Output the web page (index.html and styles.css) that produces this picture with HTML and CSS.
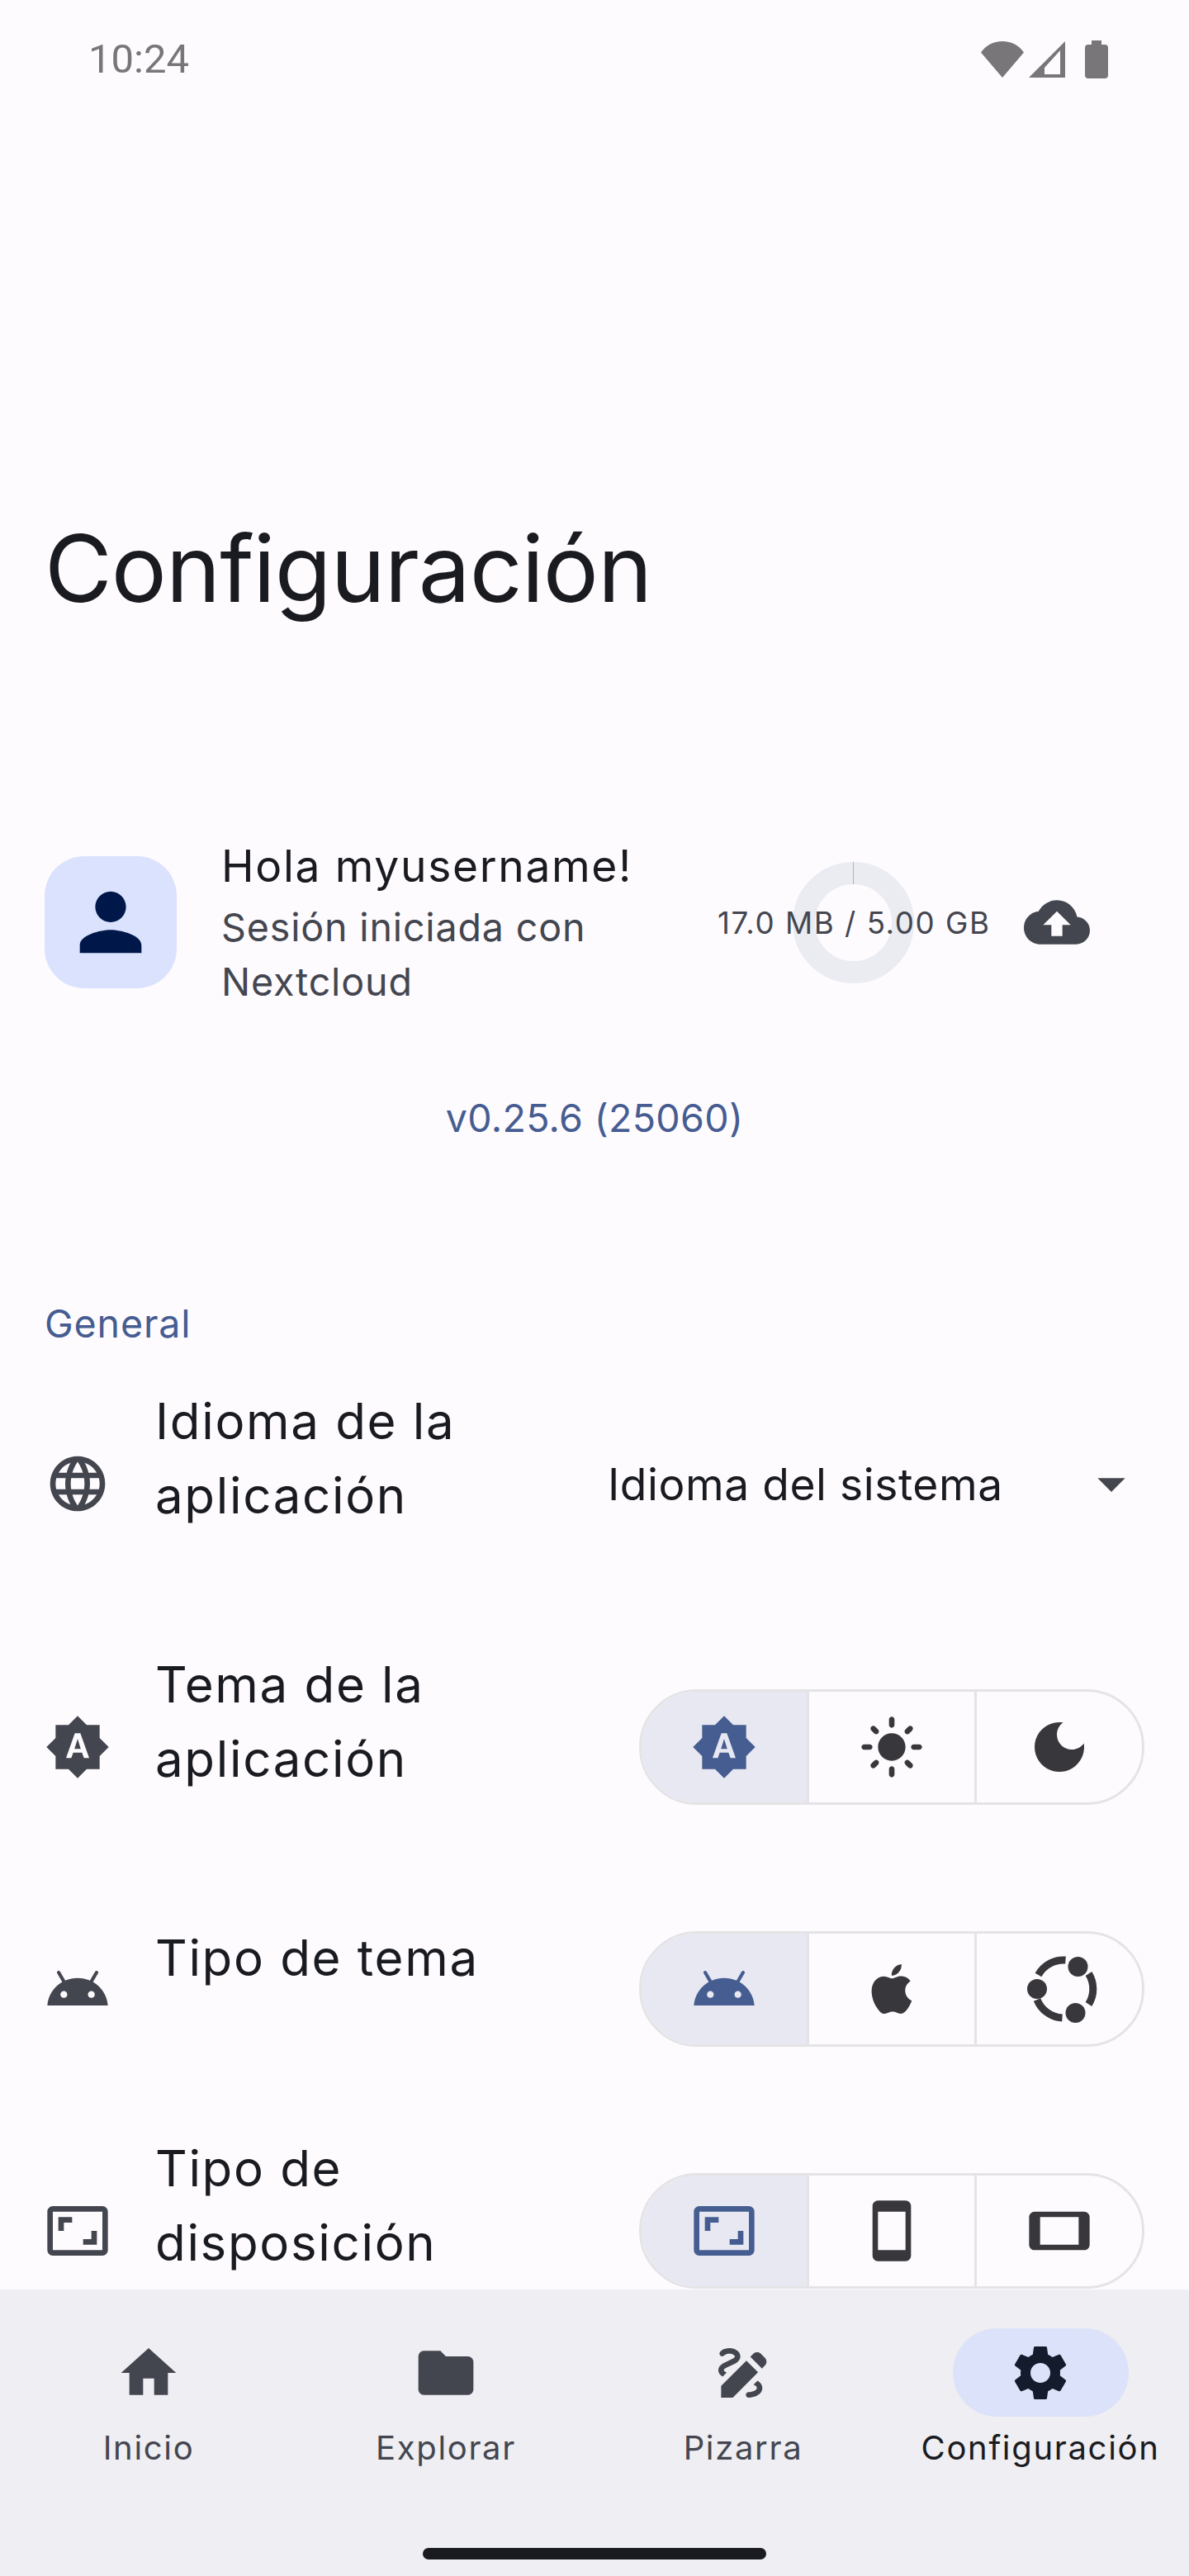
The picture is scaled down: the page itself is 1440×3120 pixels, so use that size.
FILE: index.html
```html
<!DOCTYPE html>
<html>

<head>
    <title>Configuración</title>
    <meta charset="UTF-8">
    <meta name="viewport" content="width=device-width, initial-scale=1.0">
    <link rel="stylesheet" href="styles.css">
</head>

<body>
    <svg class="icon-defs" xmlns="http://www.w3.org/2000/svg">
        <symbol id="i-person" viewBox="0 0 24 24"><path d="M12 12c2.21 0 4-1.79 4-4s-1.79-4-4-4-4 1.79-4 4 1.79 4 4 4zm0 2c-2.67 0-8 1.34-8 4v2h16v-2c0-2.66-5.33-4-8-4z"/></symbol>
        <symbol id="i-cloud" viewBox="0 0 24 24"><path d="M19.35 10.04C18.67 6.59 15.64 4 12 4 9.11 4 6.6 5.64 5.35 8.04 2.34 8.36 0 10.91 0 14c0 3.31 2.69 6 6 6h13c2.76 0 5-2.24 5-5 0-2.64-2.05-4.78-4.65-4.96zM14 13v4h-4v-4H7l5-5 5 5h-3z"/></symbol>
        <symbol id="i-globe" viewBox="0 0 24 24"><path d="M11.99 2C6.47 2 2 6.48 2 12s4.47 10 9.99 10C17.52 22 22 17.52 22 12S17.52 2 11.99 2zm6.93 6h-2.95c-.32-1.25-.78-2.45-1.38-3.56 1.84.63 3.37 1.91 4.33 3.56zM12 4.04c.83 1.2 1.48 2.53 1.91 3.96h-3.82c.43-1.43 1.08-2.76 1.91-3.96zM4.26 14C4.1 13.36 4 12.69 4 12s.1-1.36.26-2h3.38c-.08.66-.14 1.32-.14 2 0 .68.06 1.34.14 2H4.26zm.82 2h2.95c.32 1.25.78 2.45 1.38 3.56-1.84-.63-3.37-1.9-4.33-3.56zm2.95-8H5.08c.96-1.66 2.49-2.93 4.33-3.56C8.81 5.55 8.35 6.75 8.03 8zM12 19.96c-.83-1.2-1.48-2.53-1.91-3.96h3.82c-.43 1.43-1.08 2.76-1.91 3.96zM14.34 14H9.66c-.09-.66-.16-1.32-.16-2 0-.68.07-1.35.16-2h4.68c.09.65.16 1.32.16 2 0 .68-.07 1.34-.16 2zm.25 5.56c.6-1.11 1.06-2.31 1.38-3.56h2.95c-.96 1.65-2.49 2.93-4.33 3.56zM16.36 14c.08-.66.14-1.32.14-2 0-.68-.06-1.34-.14-2h3.38c.16.64.26 1.31.26 2s-.1 1.36-.26 2h-3.38z"/></symbol>
        <symbol id="i-arrow" viewBox="0 0 24 24"><path d="M7 10l5 5 5-5z"/></symbol>
        <symbol id="i-auto" viewBox="0 0 24 24"><path d="M10.85 12.65h2.3L12 9l-1.15 3.65zM20 8.69V4h-4.69L12 .69 8.69 4H4v4.69L.69 12 4 15.31V20h4.69L12 23.31 15.31 20H20v-4.69L23.31 12 20 8.69zM14.3 16l-.7-2h-3.2l-.7 2H7.8L11 7h2l3.2 9h-1.9z"/></symbol>
        <symbol id="i-sun" viewBox="0 0 24 24"><path d="M12 7c-2.76 0-5 2.24-5 5s2.24 5 5 5 5-2.24 5-5-2.24-5-5-5zM2 13h2c.55 0 1-.45 1-1s-.45-1-1-1H2c-.55 0-1 .45-1 1s.45 1 1 1zm18 0h2c.55 0 1-.45 1-1s-.45-1-1-1h-2c-.55 0-1 .45-1 1s.45 1 1 1zM11 2v2c0 .55.45 1 1 1s1-.45 1-1V2c0-.55-.45-1-1-1s-1 .45-1 1zm0 18v2c0 .55.45 1 1 1s1-.45 1-1v-2c0-.55-.45-1-1-1s-1 .45-1 1zM5.99 4.58c-.39-.39-1.03-.39-1.41 0-.39.39-.39 1.03 0 1.41l1.06 1.06c.39.39 1.03.39 1.41 0s.39-1.03 0-1.41L5.99 4.58zm12.37 12.37c-.39-.39-1.03-.39-1.41 0-.39.39-.39 1.03 0 1.41l1.06 1.06c.39.39 1.03.39 1.41 0 .39-.39.39-1.03 0-1.41l-1.06-1.06zm1.06-10.96c.39-.39.39-1.03 0-1.41-.39-.39-1.03-.39-1.41 0l-1.06 1.06c-.39.39-.39 1.03 0 1.41s1.03.39 1.41 0l1.06-1.06zM7.05 18.36c.39-.39.39-1.03 0-1.41-.39-.39-1.03-.39-1.41 0l-1.06 1.06c-.39.39-.39 1.03 0 1.41s1.03.39 1.41 0l1.06-1.06z"/></symbol>
        <symbol id="i-moon" viewBox="0 0 24 24"><path d="M12 3c-4.97 0-9 4.03-9 9s4.03 9 9 9 9-4.03 9-9c0-.46-.04-.92-.1-1.36-.98 1.37-2.58 2.26-4.4 2.26-2.98 0-5.4-2.42-5.4-5.4 0-1.81.89-3.42 2.26-4.4-.44-.06-.9-.1-1.36-.1z"/></symbol>
        <symbol id="i-android" viewBox="0 0 24 24"><path d="M17.6 9.48l1.84-3.18c.16-.31.04-.69-.26-.85-.29-.15-.65-.06-.83.22l-1.88 3.24c-2.86-1.21-6.08-1.21-8.94 0L5.65 5.67c-.19-.29-.58-.38-.87-.2-.28.18-.37.54-.22.83L6.4 9.48C3.3 11.25 1.28 14.44 1 18h22c-.28-3.56-2.3-6.75-5.4-8.52zM7 15.25c-.69 0-1.25-.56-1.25-1.25s.56-1.25 1.25-1.25 1.25.56 1.25 1.25-.56 1.25-1.25 1.25zm10 0c-.69 0-1.25-.56-1.25-1.25s.56-1.25 1.25-1.25 1.25.56 1.25 1.25-.56 1.25-1.25 1.25z"/></symbol>
        <symbol id="i-apple" viewBox="0 0 24 24"><path d="M18.71 19.5C17.88 20.74 17 21.95 15.66 21.97C14.32 22 13.89 21.18 12.37 21.18C10.84 21.18 10.37 21.95 9.1 22C7.79 22.05 6.8 20.68 5.96 19.47C4.25 17 2.94 12.45 4.7 9.39C5.57 7.87 7.13 6.91 8.82 6.88C10.1 6.86 11.32 7.75 12.11 7.75C12.89 7.75 14.37 6.68 15.92 6.84C16.57 6.87 18.39 7.1 19.56 8.82C19.47 8.88 17.39 10.1 17.41 12.63C17.44 15.65 20.06 16.66 20.09 16.67C20.06 16.74 19.67 18.11 18.71 19.5M13 3.5C13.73 2.67 14.94 2.04 15.94 2C16.07 3.17 15.6 4.35 14.9 5.19C14.21 6.04 13.07 6.7 11.95 6.61C11.8 5.46 12.36 4.26 13 3.5Z"/></symbol>
        <symbol id="i-ubuntu" viewBox="-3.5 0 100 100">
            <path class="ubuntu-arc" d="M19 33A35 35 0 0 1 52 15M80 31.500A35 35 0 0 1 80 68.500M17.500 63A35 35 0 0 0 48 85"/>
            <circle cx="17.500" cy="50" r="12"/><circle cx="67" cy="23" r="12"/><circle cx="64" cy="79" r="12"/>
        </symbol>
        <symbol id="i-ratio" viewBox="0 0 24 24"><path d="M19 12h-2v3h-3v2h5v-5zM7 9h3V7H5v5h2V9zm14-6H3c-1.1 0-2 .9-2 2v14c0 1.1.9 2 2 2h18c1.1 0 2-.9 2-2V5c0-1.1-.9-2-2-2zm0 16.010H3V4.990h18v14.020z"/></symbol>
        <symbol id="i-portrait" viewBox="0 0 24 24"><path d="M17 1.010L7 1c-1.100 0-1.990.9-1.990 2v18c0 1.100.89 2 1.990 2h10c1.100 0 2-.9 2-2V3c0-1.100-.9-1.990-2-1.990zM17 19H7V5h10v14z"/></symbol>
        <symbol id="i-landscape" viewBox="0 0 24 24"><path d="M1.010 7L1 17c0 1.100.9 2 2 2h18c1.100 0 2-.9 2-2V7c0-1.100-.9-2-2-2H3c-1.100 0-1.990.9-1.990 2zM19 7v10H5V7h14z"/></symbol>
        <symbol id="i-home" viewBox="0 0 24 24"><path d="M10 20v-6h4v6h5v-8h3L12 3 2 12h3v8z"/></symbol>
        <symbol id="i-folder" viewBox="0 0 24 24"><path d="M10 4H4c-1.100 0-1.990.9-1.990 2L2 18c0 1.100.9 2 2 2h16c1.100 0 2-.9 2-2V8c0-1.100-.9-2-2-2h-8l-2-2z"/></symbol>
        <symbol id="i-draw" viewBox="0 0 24 24"><path d="M18.850 10.390l1.060-1.060c.78-.78.78-2.050 0-2.830L18.500 5.090c-.78-.78-2.050-.78-2.830 0l-1.060 1.060 4.240 4.240zm-5.660-2.830L4 16.760V21h4.240l9.190-9.190-4.240-4.250zM19 17.500c0 2.190-2.540 3.500-5 3.500-.55 0-1-.45-1-1s.45-1 1-1c1.540 0 3-.73 3-1.500 0-.47-.48-.87-1.230-1.200l1.480-1.480c1.070.63 1.750 1.470 1.750 2.680zM4.580 13.350C3.610 12.790 3 12.060 3 11c0-1.800 1.890-2.630 3.560-3.360C7.590 7.180 9 6.560 9 6c0-.41-.78-1-2-1-1.260 0-1.800.61-1.830.64-.35.41-.98.46-1.400.12-.41-.34-.49-.95-.15-1.380C3.730 4.240 4.760 3 7 3s4 1.320 4 3c0 1.870-1.930 2.720-3.640 3.470C6.420 9.880 5 10.500 5 11c0 .31.43.6 1.070.86l-1.490 1.490z"/></symbol>
        <symbol id="i-gear" viewBox="0 0 24 24"><path d="M19.140 12.940c.04-.3.06-.61.06-.94 0-.32-.02-.64-.07-.94l2.030-1.580c.18-.14.23-.41.12-.61l-1.920-3.320c-.12-.22-.37-.29-.59-.22l-2.390.96c-.5-.38-1.030-.7-1.620-.94l-.36-2.540c-.04-.24-.24-.41-.48-.41h-3.840c-.24 0-.43.17-.47.41l-.36 2.540c-.59.24-1.130.57-1.620.94l-2.390-.96c-.22-.08-.47 0-.59.22L2.740 8.870c-.12.21-.08.47.12.61l2.030 1.580c-.05.3-.09.63-.09.94s.02.64.07.94l-2.030 1.580c-.18.14-.23.41-.12.61l1.920 3.320c.12.22.37.29.59.22l2.390-.96c.5.38 1.030.7 1.620.94l.36 2.54c.05.24.24.41.48.41h3.840c.24 0 .44-.17.47-.41l.36-2.540c.59-.24 1.130-.56 1.620-.94l2.390.96c.22.08.47 0 .59-.22l1.920-3.320c.12-.22.07-.47-.12-.61l-2.010-1.580zM12 15.600c-1.980 0-3.600-1.620-3.600-3.600s1.620-3.600 3.600-3.600 3.600 1.620 3.600 3.600-1.620 3.600-3.600 3.600z"/></symbol>
    </svg>

    <div class="phone">
        <div class="status-bar">
            <span class="status-time">10:24</span>
            <div class="status-icons">
                <svg class="status-wifi" viewBox="0 0 52 44"><path d="M26 44L0 13.500C6 5 15 0 26 0s20 5 26 13.500z"/></svg>
                <svg class="status-signal" viewBox="0 0 44 44"><path fill-rule="evenodd" d="M44 0V44H0zM38 11L19 32V40H38z"/></svg>
                <div class="status-battery"></div>
            </div>
        </div>

        <main class="content">
            <h1 class="page-title">Configuración</h1>

            <section class="profile">
                <div class="avatar"><svg class="icon-avatar"><use href="#i-person"/></svg></div>
                <div class="profile-text">
                    <div class="profile-name">Hola myusername!</div>
                    <div class="profile-sub">Sesión iniciada con Nextcloud</div>
                </div>
                <div class="storage">
                    <svg class="storage-ring" viewBox="0 0 147 147">
                        <circle class="ring-track" cx="73.500" cy="73.500" r="60"/>
                        <path class="ring-tick" d="M73.500 0V27"/>
                    </svg>
                    <span class="storage-text">17.0 MB / 5.00 GB</span>
                    <svg class="icon icon-muted"><use href="#i-cloud"/></svg>
                </div>
            </section>

            <div class="version">v0.25.6 (25060)</div>

            <h2 class="section-title">General</h2>

            <div class="setting setting-lang">
                <svg class="icon icon-muted"><use href="#i-globe"/></svg>
                <div class="setting-label">Idioma de la aplicación</div>
                <div class="dropdown">
                    <span>Idioma del sistema</span>
                    <svg class="icon icon-muted"><use href="#i-arrow"/></svg>
                </div>
            </div>

            <div class="setting">
                <svg class="icon icon-muted"><use href="#i-auto"/></svg>
                <div class="setting-label">Tema de la aplicación</div>
                <div class="toggle">
                    <div class="toggle-seg is-on"><svg class="icon"><use href="#i-auto"/></svg></div>
                    <div class="toggle-seg"><svg class="icon"><use href="#i-sun"/></svg></div>
                    <div class="toggle-seg"><svg class="icon"><use href="#i-moon"/></svg></div>
                </div>
            </div>

            <div class="setting setting-short">
                <svg class="icon icon-muted"><use href="#i-android"/></svg>
                <div class="setting-label">Tipo de tema</div>
                <div class="toggle">
                    <div class="toggle-seg is-on"><svg class="icon"><use href="#i-android"/></svg></div>
                    <div class="toggle-seg"><svg class="icon icon-apple"><use href="#i-apple"/></svg></div>
                    <div class="toggle-seg"><svg class="icon icon-ubuntu"><use href="#i-ubuntu"/></svg></div>
                </div>
            </div>

            <div class="setting">
                <svg class="icon icon-muted"><use href="#i-ratio"/></svg>
                <div class="setting-label">Tipo de disposición</div>
                <div class="toggle">
                    <div class="toggle-seg is-on"><svg class="icon"><use href="#i-ratio"/></svg></div>
                    <div class="toggle-seg"><svg class="icon"><use href="#i-portrait"/></svg></div>
                    <div class="toggle-seg"><svg class="icon"><use href="#i-landscape"/></svg></div>
                </div>
            </div>
        </main>

        <nav class="bottom-nav">
            <div class="nav-items">
                <div class="nav-item">
                    <div class="nav-pill"><svg class="icon"><use href="#i-home"/></svg></div>
                    <span class="nav-label">Inicio</span>
                </div>
                <div class="nav-item">
                    <div class="nav-pill"><svg class="icon"><use href="#i-folder"/></svg></div>
                    <span class="nav-label">Explorar</span>
                </div>
                <div class="nav-item">
                    <div class="nav-pill"><svg class="icon"><use href="#i-draw"/></svg></div>
                    <span class="nav-label">Pizarra</span>
                </div>
                <div class="nav-item is-active">
                    <div class="nav-pill"><svg class="icon"><use href="#i-gear"/></svg></div>
                    <span class="nav-label">Configuración</span>
                </div>
            </div>
            <div class="home-indicator"></div>
        </nav>
    </div>
</body>

</html>
```

FILE: styles.css
```css
* {
    box-sizing: border-box;
}

body {
    margin: 0;
    font-family: Inter, "Noto Sans", sans-serif;
    background-color: #fefbff;
    color: #1a1b20;
}

.icon-defs {
    display: none;
}

.phone {
    width: 1440px;
    height: 3120px;
    display: flex;
    flex-direction: column;
    overflow: hidden;
}

/* status bar */
.status-bar {
    height: 144px;
    flex: none;
    display: flex;
    justify-content: space-between;
    padding: 49px 98px 0 107px;
    color: #79767a;
}

.status-time {
    font-family: Roboto, sans-serif;
    font-size: 49px;
    line-height: 46px;
}

.status-icons {
    display: flex;
    gap: 6px;
    align-items: flex-start;
}

.status-icons svg {
    fill: #79767a;
    height: 44px;
    margin-top: 1px;
}

.status-wifi {
    width: 52px;
}

.status-signal {
    width: 44px;
}

.status-battery {
    position: relative;
    width: 28px;
    height: 41px;
    margin: 5px 0 0 18px;
    background: #79767a;
    border-radius: 4px;
}

.status-battery::before {
    content: "";
    position: absolute;
    left: 8px;
    top: -5px;
    width: 12px;
    height: 6px;
    background: #79767a;
}

/* scroll area */
.content {
    flex: 1;
    min-height: 0;
    overflow: hidden;
}

.page-title {
    margin: 476px 0 0;
    padding-left: 54px;
    font-size: 112px;
    font-weight: 400;
    line-height: 136px;
    letter-spacing: -1px;
}

.profile {
    display: flex;
    align-items: center;
    margin-top: 256px;
    padding-left: 54px;
}

.avatar {
    width: 160px;
    height: 160px;
    flex: none;
    display: flex;
    align-items: center;
    justify-content: center;
    background: #dbe2fe;
    border-radius: 48px;
}

.icon-avatar {
    width: 112px;
    height: 112px;
    fill: #001849;
}

.profile-text {
    width: 546px;
    flex: none;
    padding: 0 0 0 54px;
}

.profile-name {
    font-size: 53.300px;
    line-height: 74px;
    letter-spacing: 1.670px;
    white-space: nowrap;
}

.profile-sub {
    width: 450px;
    margin-top: 4px;
    font-size: 46.600px;
    line-height: 66px;
    letter-spacing: 0.830px;
    color: #44464f;
}

.storage {
    position: relative;
    display: flex;
    align-items: center;
    gap: 40px;
    margin-left: 109px;
    height: 147px;
}

.storage-ring {
    position: absolute;
    left: 91px;
    top: 0;
    width: 147px;
    height: 147px;
}

.ring-track {
    fill: none;
    stroke: #eaecf2;
    stroke-width: 27;
}

.ring-tick {
    stroke: #a9b4cf;
    stroke-width: 1;
}

.storage-text {
    position: relative;
    font-size: 36.700px;
    letter-spacing: 1.550px;
    color: #44464f;
}

.icon {
    width: 80px;
    height: 80px;
    flex: none;
    fill: currentColor;
    position: relative;
}

.icon-muted {
    color: #44464f;
}

.version {
    margin-top: 99px;
    text-align: center;
    font-size: 46.600px;
    line-height: 66px;
    letter-spacing: 0.300px;
    color: #465d91;
}

.section-title {
    margin: 183px 0 0;
    padding-left: 54px;
    font-size: 46.600px;
    font-weight: 400;
    line-height: 66px;
    letter-spacing: 0.830px;
    color: #465d91;
}

/* settings rows */
.setting {
    display: flex;
    align-items: center;
    height: 316px;
    padding: 0 54px;
}

.setting-lang {
    height: 322px;
}

.setting-short {
    height: 270px;
}

.setting-label {
    width: 400px;
    margin-left: 54px;
    padding-bottom: 62px;
    font-size: 60px;
    line-height: 90px;
    letter-spacing: 1.670px;
}

.setting-short .setting-label {
    padding-bottom: 76px;
}

.dropdown {
    flex: 1;
    display: flex;
    align-items: center;
    justify-content: space-between;
    margin-left: 148px;
    font-size: 53.300px;
    letter-spacing: 0.550px;
}

.toggle {
    display: flex;
    width: 612px;
    height: 140px;
    margin-left: auto;
    border: 3px solid #e4e3e6;
    border-radius: 70px;
    overflow: hidden;
    flex: none;
    color: #38373c;
}

.toggle-seg {
    flex: 1;
    display: flex;
    align-items: center;
    justify-content: center;
}

.toggle-seg + .toggle-seg {
    border-left: 3px solid #e4e3e6;
}

.toggle-seg.is-on {
    background: #e7e8f1;
    color: #465d91;
}

.icon-apple {
    width: 72px;
    height: 72px;
}

.icon-ubuntu {
    width: 100px;
    height: 100px;
    left: 2px;
}

.ubuntu-arc {
    fill: none;
    stroke: currentColor;
    stroke-width: 9;
}

/* bottom navigation */
.bottom-nav {
    height: 347px;
    flex: none;
    background: #eeeef3;
    color: #44464f;
}

.nav-items {
    display: flex;
    padding-top: 47px;
}

.nav-item {
    flex: 1;
    display: flex;
    flex-direction: column;
    align-items: center;
}

.nav-pill {
    width: 213px;
    height: 107px;
    display: flex;
    align-items: center;
    justify-content: center;
    border-radius: 54px;
}

.nav-label {
    margin-top: 13px;
    font-size: 40px;
    line-height: 50px;
    letter-spacing: 1.670px;
    white-space: nowrap;
}

.nav-item.is-active {
    color: #1a1b20;
}

.nav-item.is-active .nav-pill {
    background: #dce2f9;
    color: #141b2c;
}

.home-indicator {
    width: 416px;
    height: 14px;
    margin: 96px auto 0;
    background: #1a1b20;
    border-radius: 7px;
}
```
